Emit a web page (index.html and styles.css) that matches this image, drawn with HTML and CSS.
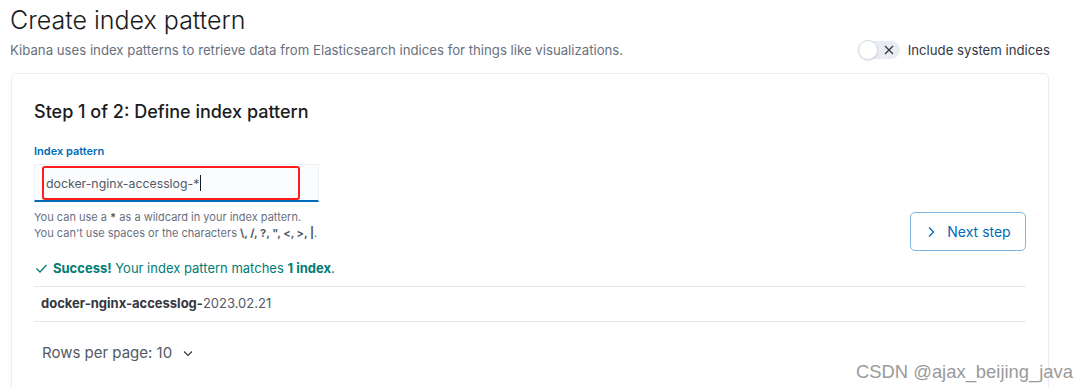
FILE: index.html
```html
<!DOCTYPE html>
<html lang="en">
<head>
    <meta charset="UTF-8">
    <title>Create index pattern</title>
    <link rel="stylesheet" href="styles.css">
</head>
<body>
    <div class="header">
        <h1>Create index pattern</h1>
        <div class="subrow">
            <p class="intro">Kibana uses index patterns to retrieve data from Elasticsearch indices for things like visualizations.</p>
            <label class="switch">
                <span class="track">
                    <span class="knob"></span>
                    <svg class="x" width="10" height="10" viewBox="0 0 10 10"><path d="M1 1L9 9M9 1L1 9" stroke="#343741" stroke-width="1.3" fill="none"/></svg>
                </span>
                Include system indices
            </label>
        </div>
    </div>

    <div class="panel">
        <h2>Step 1 of 2: Define index pattern</h2>
        <div class="form-row">
            <div class="field">
                <div class="label">Index pattern</div>
                <div class="input">
                    <span class="mark">docker-nginx-accesslog-*<span class="caret"></span></span>
                </div>
                <div class="help">
                    You can use a <b>*</b> as a wildcard in your index pattern.<br>
                    You can't use spaces or the characters <b>\, /, ?, ", &lt;, &gt;, |</b>.
                </div>
            </div>
            <button class="next">
                <svg width="12" height="12" viewBox="0 0 12 12"><path d="M4 1.5L8.5 6L4 10.5" stroke="#006bb8" stroke-width="1.3" fill="none"/></svg>
                Next step
            </button>
        </div>

        <div class="success">
            <svg width="13" height="13" viewBox="0 0 13 13"><path d="M1.5 6.5L5 10L11.5 3" stroke="#017d73" stroke-width="1.3" fill="none"/></svg>
            <span><b>Success!</b> Your index pattern matches <b>1 index</b>.</span>
        </div>

        <div class="table">
            <div class="row"><b>docker-nginx-accesslog-</b>2023.02.21</div>
        </div>

        <div class="pager">
            Rows per page: 10
            <svg width="12" height="12" viewBox="0 0 12 12"><path d="M2 4.5L6 8.5L10 4.5" stroke="#343741" stroke-width="1.2" fill="none"/></svg>
        </div>
    </div>

    <div class="watermark">CSDN @ajax_beijing_java</div>
</body>
</html>
```

FILE: styles.css
```css
body {
    margin: 0;
    padding: 0 10px;
    font-family: Inter, "Noto Sans", sans-serif;
    color: #343741;
    background: #fff;
    overflow: hidden;
    height: 387px;
    position: relative;
}
h1 {
    font-size: 25px;
    font-weight: 300;
    margin: 0;
    padding-top: 3px;
    line-height: 34px;
    color: #1a1c21;
}
.subrow {
    display: flex;
    align-items: center;
    justify-content: space-between;
    padding-right: 28px;
    height: 26px;
}
.intro {
    margin: 0;
    font-size: 13.2px;
    color: #69707d;
}
.switch {
    display: flex;
    align-items: center;
    gap: 8px;
    font-size: 13.2px;
    color: #343741;
}
.track {
    position: relative;
    width: 42px;
    height: 18px;
    border-radius: 9px;
    background: #e9edf3;
    display: inline-block;
}
.knob {
    position: absolute;
    left: 0;
    top: -1px;
    width: 18px;
    height: 18px;
    border-radius: 50%;
    background: #fff;
    border: 1px solid #d3dae6;
    box-shadow: 0 1px 2px rgba(0,0,0,0.1);
}
.track .x {
    position: absolute;
    right: 6px;
    top: 4px;
}
.panel {
    margin-top: 10px;
    margin-left: 1px;
    width: 1038px;
    box-sizing: border-box;
    border: 1px solid #e9edf3;
    border-radius: 6px;
    padding: 26px 22px 0 22px;
    height: 320px;
    box-shadow: 0 1px 3px rgba(0,0,0,0.04);
}
h2 {
    margin: 0;
    font-size: 18px;
    font-weight: 500;
    color: #1a1c21;
    line-height: 24px;
}
.form-row {
    display: flex;
    justify-content: space-between;
    align-items: flex-start;
    margin-top: 20px;
}
.label {
    font-size: 11px;
    font-weight: 600;
    color: #006bb8;
    line-height: 14px;
    margin-bottom: 6px;
}
.input {
    width: 285px;
    height: 38px;
    box-sizing: border-box;
    background: #fbfcfd;
    border: 1px solid #eef1f5;
    border-bottom: 2px solid #006bb8;
    padding: 1px 0 0 7px;
}
.mark {
    display: flex;
    align-items: center;
    width: 258px;
    height: 34px;
    box-sizing: border-box;
    border: 2px solid #ff1c1c;
    border-radius: 3px;
    padding-left: 2px;
    font-size: 12.3px;
    color: #535966;
}
.caret {
    display: inline-block;
    width: 1px;
    height: 16px;
    background: #1a1c21;
    margin-left: 1px;
}
.help {
    margin-top: 7px;
    font-size: 11px;
    line-height: 16px;
    color: #69707d;
}
.help b {
    color: #535966;
}
.next {
    margin-top: 68px;
    width: 116px;
    height: 39px;
    border: 1px solid #7ab6e0;
    border-radius: 5px;
    background: #fff;
    color: #006bb8;
    font-family: inherit;
    font-size: 14px;
    display: flex;
    align-items: center;
    justify-content: center;
    gap: 10px;
    padding: 0;
}
.success {
    margin-top: 9px;
    display: flex;
    align-items: center;
    gap: 5px;
    font-size: 13px;
    color: #017d73;
    padding-left: 1px;
}
.table {
    margin-top: 10px;
    width: 992px;
    border-top: 1px solid #e3e8f2;
    border-bottom: 1px solid #e3e8f2;
}
.row {
    font-size: 13px;
    color: #535966;
    padding: 8px 7px 10px 7px;
}
.row b {
    color: #343741;
}
.pager {
    margin-top: 21px;
    padding-left: 8px;
    font-size: 15px;
    color: #535966;
    display: flex;
    align-items: center;
    gap: 10px;
}
.watermark {
    position: absolute;
    left: 856px;
    top: 361px;
    font-family: "Liberation Sans", Arial, sans-serif;
    font-size: 18.4px;
    color: #9a9a9a;
}
```
